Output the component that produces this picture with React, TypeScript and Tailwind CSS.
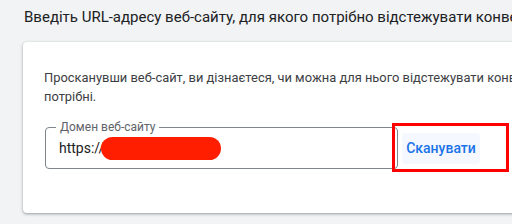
export default function App() {
  return (
    <div className="w-[512px] h-[224px] overflow-hidden bg-[#f1f3f4] pl-[23px] pt-[7px] font-['Roboto',sans-serif]">
      <h1 className="whitespace-nowrap pl-[1px] text-[15px] leading-[20px] text-[#202124]">
        Введіть URL-адресу веб-сайту, для якого потрібно відстежувати конверсії
      </h1>
      <div className="mt-[15px] w-[620px] rounded-[4px] bg-white shadow-[0_1px_2px_rgba(60,64,67,0.3),0_1px_3px_1px_rgba(60,64,67,0.15)] pl-[21px] pt-[26px] pb-[44px]">
        <p className="whitespace-nowrap text-[12.9px] leading-[19px] text-[#3c4043]">
          Просканувши веб-сайт, ви дізнаєтеся, чи можна для нього відстежувати конверсії без додаткових налаштувань чи
          <br />
          потрібні.
        </p>
        <div className="relative mt-[21px] flex items-center gap-[4px] pl-[1px]">
          <div className="relative flex h-[42px] w-[353px] items-center rounded-[4px] border border-[#80868b] pl-[13px]">
            <span className="absolute left-[10px] top-[-8px] bg-white px-[4px] text-[12px] leading-[14px] text-[#5f6368]">
              Домен веб-сайту
            </span>
            <span className="text-[14px] text-[#202124]">https://</span>
            <span className="ml-[-3px] inline-block h-[23px] w-[120px] rounded-full bg-[#ff1f00]" />
          </div>
          <button className="h-[31px] w-[78px] rounded-[4px] bg-[#f5f8fe] text-[14px] font-medium text-[#1a73e8]">
            Сканувати
          </button>
          <div className="absolute left-[348px] top-[-4px] h-[49px] w-[117px] border-[3px] border-[#ff0000]" />
        </div>
      </div>
    </div>
  );
}
